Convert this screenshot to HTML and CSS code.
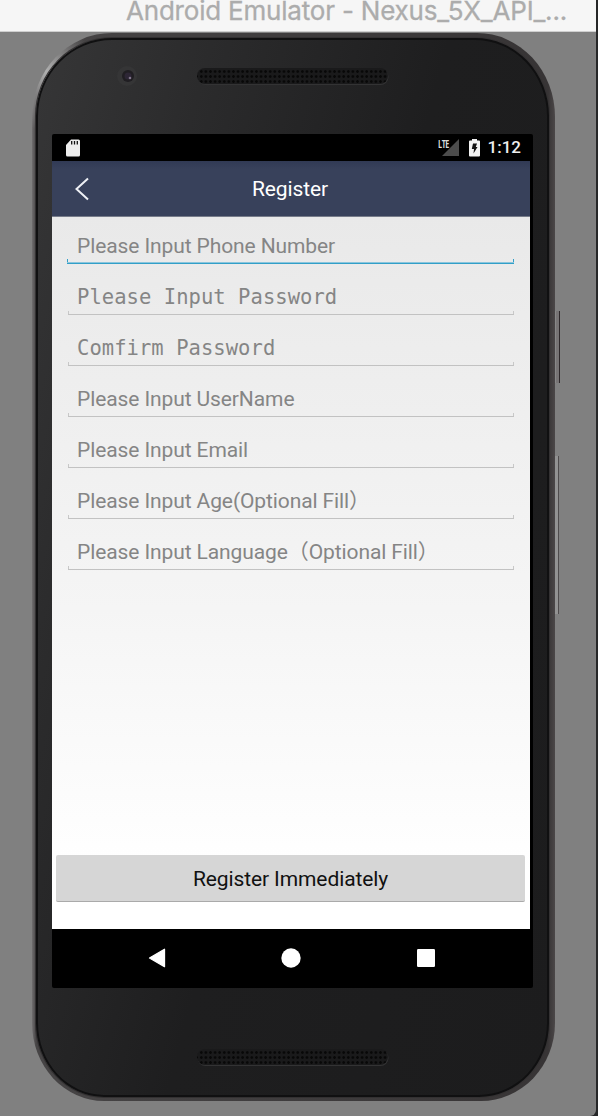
FILE: index.html
```
<!DOCTYPE html>
<html lang="en">
<head>
<meta charset="utf-8">
<title>Android Emulator</title>
<link rel="stylesheet" href="styles.css">
</head>
<body>
<div class="desktop">
  <div class="window">
    <header class="titlebar"><span class="title">Android Emulator - Nexus_5X_API_...</span></header>
    <div class="stage">
      <div class="phone">
        <i class="key power"></i><i class="key volume"></i>
        <div class="face">
          <div class="bezel top">
            <svg class="camera" width="22" height="22" viewBox="0 0 22 22"><circle cx="11" cy="11" r="10" fill="#353536"/><circle cx="12" cy="11" r="6" fill="#201e22"/><circle cx="12" cy="11" r="3.5" fill="#2d2635"/><circle cx="14" cy="13" r="1.3" fill="#82758c"/></svg>
            <div class="speaker"></div>
          </div>
          <div class="screen">
            <div class="status">
              <svg class="sd" width="14" height="18" viewBox="0 0 14 18"><path d="M5 .5h7.5Q14 .5 14 2v14q0 1.500-1.500 1.500h-11Q0 17.500 0 16V6z" fill="#eee"/><path d="M5.700 2v3.500M8.500 2v3.500M11.300 2v3.500" stroke="#111" stroke-width="1.300"/></svg>
              <div class="network"><span class="lte">LTE</span><svg class="signal" width="17" height="17" viewBox="0 0 17 17"><path d="M17 0v17H0z" fill="#4c4c4c"/></svg></div>
              <svg class="battery" width="11" height="18" viewBox="0 0 11 18"><path d="M3 0h5v1.500h2q1 0 1 1V16.500q0 1-1 1H1q-1 0-1-1V2.500q0-1 1-1h2z" fill="#f2f2f2"/><path d="M4 4.500h4L6.800 8H8.500L4.500 14.500 5 10H2.800z" fill="#111"/></svg>
              <span class="clock">1:12</span>
            </div>
            <div class="appbar">
              <svg class="back" width="14" height="24" viewBox="0 0 14 24"><path d="M13 1.500 1.500 12 13 22.500" fill="none" stroke="#eef0f5" stroke-width="2"/></svg>
              <span class="heading">Register</span>
            </div>
            <main class="content">
              <div class="form">
                <div class="field active"><span>Please Input Phone Number</span></div>
                <div class="field mono"><span>Please Input Password</span></div>
                <div class="field mono"><span>Comfirm Password</span></div>
                <div class="field"><span>Please Input UserName</span></div>
                <div class="field"><span>Please Input Email</span></div>
                <div class="field"><span>Please Input Age(Optional Fill）</span></div>
                <div class="field"><span>Please Input Language（Optional Fill）</span></div>
              </div>
              <div class="submit">Register Immediately</div>
            </main>
            <nav class="nav">
              <svg width="20" height="20" viewBox="0 0 20 20"><path d="M2.500 10 17.500 1.300v17.400z" fill="#fff" stroke="#fff" stroke-width="1.300" stroke-linejoin="round"/></svg>
              <svg width="20" height="20" viewBox="0 0 20 20"><circle cx="10" cy="10" r="9.700" fill="#fff"/></svg>
              <svg width="20" height="20" viewBox="0 0 20 20"><rect x="1" y="1" width="18" height="18" rx="1.200" fill="#fff"/></svg>
            </nav>
          </div>
          <div class="bezel bottom"><div class="speaker"></div></div>
        </div>
      </div>
    </div>
  </div>
</div>
</body>
</html>
```
FILE: styles.css
```
* { box-sizing: border-box; }
body { margin: 0; font-family: Roboto, "Noto Sans CJK SC", sans-serif; }
.desktop { width: 598px; height: 1116px; background: #262728; overflow: hidden; }
.window { width: 596px; height: 1116px; background: #808080; border-bottom-right-radius: 6px; overflow: hidden; }
.titlebar { height: 32px; padding-left: 126px; background: #f6f6f6; border-bottom: 1px solid #cfcfcf; }
.title { display: block; font: 26px/22px Inter, sans-serif; color: #acacac; white-space: nowrap; letter-spacing: -0.2px; -webkit-text-stroke: 0.3px #acacac; }
.stage { padding: 1px 0 0 32px; }
.phone {
  position: relative; width: 523px; height: 1068px; padding: 5px 6px 4px 4px;
  border-radius: 80px 78px 74px 72px / 84px 84px 78px 78px;
  background:
    radial-gradient(ellipse 45px 60px at 14px 38px, #b0b0b0 0, rgba(176, 176, 176, 0) 100%),
    linear-gradient(90deg, #716f70 0, #464445 4px, #373435 516px, #4b4748 100%);
}
.key { position: absolute; left: 523px; width: 5px; }
.power { top: 278px; height: 72px; background: #777475; border-right: 1px solid #2e292b; border-left: 1px solid #888; }
.volume { top: 423px; height: 158px; width: 4px; background: #929292; border-right: 1px solid #4f4c4d; }
.face {
  height: 100%; padding: 0 0 0 14px; border: 2px solid #101011;
  border-radius: 76px 74px 70px 68px / 78px 78px 74px 74px;
  background: linear-gradient(105deg, #363637 0, #2b2b2c 22%, #1e1e1f 52%, #1c1c1d 100%);
  box-shadow: 0 0 0 1px #333132;
}
.bezel { display: flex; align-items: flex-start; }
.top { height: 94px; padding: 25px 0 0 64px; gap: 59px; }
.bottom { height: 110px; padding: 61px 0 0 145px; }
.speaker {
  width: 191px; height: 16px; border-radius: 8px; background-color: #1a1a1b;
  background-image: radial-gradient(circle, #080808 1px, transparent 1.6px);
  background-size: 4.6px 5px; background-position: 2px 1px;
  box-shadow: 0.5px 1px 0 #333334;
}
.top .speaker { margin-top: 3px; }
.screen { width: 481px; height: 854px; background: #000; border-radius: 2px; overflow: hidden; }
.status { height: 27px; display: flex; align-items: center; padding: 0 12px 0 14px; }
.network { display: flex; width: 21px; height: 17px; margin-left: auto; margin-right: 10px; }
.lte { font: 700 10px/11px "Open Sans", sans-serif; letter-spacing: -0.6px; width: 12px; height: 11px; margin-right: -8px; color: #ddd; transform: scaleX(.72); transform-origin: left; z-index: 1; white-space: nowrap; }
.clock { margin-left: 8px; font-size: 17px; line-height: 27px; font-weight: 500; color: #eee; }
.appbar { width: 478px; height: 56px; padding-left: 23px; display: flex; align-items: center; background: linear-gradient(#313a55 0, #38415b 8px); border-bottom: 1px solid #777c8a; }
.heading { width: 418px; margin-left: -8px; padding-top: 1px; text-align: center; color: #fff; font-size: 21px; line-height: 28px; letter-spacing: -0.1px; }
.content { width: 478px; height: 712px; padding: 0 5px 27px 4px; background: linear-gradient(#e9e9e9, #f5f5f5 55%, #fff 92%); display: flex; flex-direction: column; justify-content: space-between; }
.form { padding: 0 7px 0 11px; }
.field { height: 51px; padding: 15px 0 0 10px; color: #858585; font-size: 21px; line-height: 28px; letter-spacing: -0.1px; white-space: nowrap; background: linear-gradient(#c2c2c2, #c2c2c2) 1px 46px / 446px 1px no-repeat, linear-gradient(#c8c8c8, #c8c8c8) 1px 43px / 1px 4px no-repeat, linear-gradient(#c8c8c8, #c8c8c8) 446px 43px / 1px 4px no-repeat; }
.active { background: linear-gradient(#329fc8, #329fc8) 0 46px / 447px 1px no-repeat, linear-gradient(#8cc5dc, #8cc5dc) 0 45px / 447px 1px no-repeat, linear-gradient(#329fc8, #329fc8) 0 42px / 1px 5px no-repeat, linear-gradient(#329fc8, #329fc8) 446px 42px / 1px 5px no-repeat; }
.mono { font-family: "DejaVu Sans Mono", monospace; font-size: 20.500px; letter-spacing: 0.05px; }
.submit { height: 47px; border-radius: 2px; background: #d6d6d6; border-bottom: 1px solid #aaa; color: #111; font-size: 21px; line-height: 48px; letter-spacing: -0.1px; text-align: center; }
.nav { width: 478px; height: 59px; display: flex; align-items: center; justify-content: center; gap: 114.500px; padding-bottom: 2px; }
```
